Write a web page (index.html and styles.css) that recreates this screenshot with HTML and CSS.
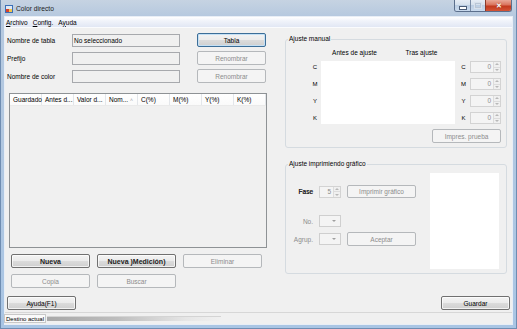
FILE: index.html
```html
<!DOCTYPE html>
<html lang="es">
<head>
<meta charset="UTF-8">
<title>Color directo</title>
<link rel="stylesheet" href="styles.css">
</head>
<body>
<div class="window">
  <div class="titlebar">
    <svg class="app-icon" width="8" height="8" viewBox="0 0 8 8">
      <rect x="0" y="0" width="8" height="8" fill="#3b6fb6"/>
      <rect x="1" y="1" width="6" height="3" fill="#dfe9f6"/>
      <rect x="1" y="4" width="3" height="3" fill="#d8412f"/>
      <rect x="4" y="4" width="3" height="3" fill="#f3c64a"/>
    </svg>
    <span class="title">Color directo</span>
    <div class="caption-buttons">
      <span class="cap min"><i></i></span>
      <span class="cap max"><i></i></span>
      <span class="cap close">&#x2715;</span>
    </div>
  </div>
  <div class="client">
    <div class="menubar">
      <span><u>A</u>rchivo</span>
      <span><u>C</u>onfig.</span>
      <span>A<u>y</u>uda</span>
    </div>
    <div class="content">
      <div class="panels">
        <div class="left">
          <div class="field-row">
            <span class="field-label">Nombre de tabla</span>
            <div class="textbox">No seleccionado</div>
            <button class="btn default">Tabla</button>
          </div>
          <div class="field-row">
            <span class="field-label">Prefijo</span>
            <div class="textbox"></div>
            <button class="btn disabled">Renombrar</button>
          </div>
          <div class="field-row">
            <span class="field-label">Nombre de color</span>
            <div class="textbox"></div>
            <button class="btn disabled">Renombrar</button>
          </div>
          <div class="listview">
            <div class="lv-header">
              <span>Guardado</span>
              <span>Antes d...</span>
              <span>Valor d...</span>
              <span>Nom... <em>&#x2c4;</em></span>
              <span>C(%)</span>
              <span>M(%)</span>
              <span>Y(%)</span>
              <span>K(%)</span>
            </div>
          </div>
          <div class="btn-row">
            <button class="btn wide strong">Nueva</button>
            <button class="btn wide strong">Nueva )Medición)</button>
            <button class="btn wide disabled">Eliminar</button>
          </div>
          <div class="btn-row">
            <button class="btn wide disabled">Copia</button>
            <button class="btn wide disabled">Buscar</button>
          </div>
        </div>
        <div class="right">
          <fieldset class="group">
            <legend>Ajuste manual</legend>
            <div class="manual">
              <div class="adjust-grid">
                <div class="adjust-head"><span>Antes de ajuste</span><span>Tras ajuste</span></div>
                <div class="preview"></div>
                <span class="ch r1">C</span><span class="ch r2">M</span><span class="ch r3">Y</span><span class="ch r4">K</span>
                <span class="ch side r1">C</span><span class="ch side r2">M</span><span class="ch side r3">Y</span><span class="ch side r4">K</span>
                <div class="spin r1"><span>0</span><b></b></div>
                <div class="spin r2"><span>0</span><b></b></div>
                <div class="spin r3"><span>0</span><b></b></div>
                <div class="spin r4"><span>0</span><b></b></div>
              </div>
              <div class="manual-actions">
                <button class="btn disabled">Impres. prueba</button>
              </div>
            </div>
          </fieldset>
          <fieldset class="group chart">
            <legend>Ajuste imprimiendo gráfico</legend>
            <div class="chart-body">
              <div class="chart-controls">
                <div class="ctl-row first">
                  <span class="ctl-label active">Fase</span>
                  <div class="spin small"><span>5</span><b></b></div>
                  <button class="btn disabled">Imprimir gráfico</button>
                </div>
                <div class="ctl-row second">
                  <span class="ctl-label">No.</span>
                  <div class="combo"></div>
                </div>
                <div class="ctl-row third">
                  <span class="ctl-label">Agrup.</span>
                  <div class="combo"></div>
                  <button class="btn disabled">Aceptar</button>
                </div>
              </div>
              <div class="chart-preview"></div>
            </div>
          </fieldset>
        </div>
      </div>
      <div class="footer">
        <button class="btn">Ayuda(F1)</button>
        <button class="btn">Guardar</button>
      </div>
    </div>
    <div class="statusbar">
      <span class="status-panel">Destino actual</span>
      <span class="status-glow"></span>
    </div>
  </div>
</div>
</body>
</html>
```

FILE: styles.css
```css
* {
  box-sizing: border-box;
}
html, body {
  margin: 0;
  padding: 0;
}
body {
  width: 517px;
  height: 329px;
  overflow: hidden;
  font-family: "Liberation Sans", Arial, sans-serif;
  font-size: 6.5px;
  color: #000;
  background: #fff;
}
.window {
  width: 517px;
  height: 329px;
  display: flex;
  flex-direction: column;
  padding: 0 5px 5px;
  background: linear-gradient(180deg, #c6d3e2 0, #b6c9df 16px, #a9c5e4 100%);
  box-shadow: inset 1px 0 0 #6f8db2, inset -1px 0 0 #6f8db2, inset 0 -1px 0 #6f8db2;
}
.titlebar {
  height: 17px;
  display: flex;
  align-items: flex-start;
}
.app-icon {
  margin-top: 5px;
}
.title {
  margin: 4px 0 0 3px;
  line-height: 9px;
  font-size: 6.7px;
  color: #1a1a1a;
}
.caption-buttons {
  margin-left: auto;
  display: flex;
  height: 12px;
  border: 1px solid #5b6f8c;
  border-top: none;
  border-radius: 0 0 3px 3px;
  overflow: hidden;
}
.cap {
  display: flex;
  align-items: center;
  justify-content: center;
  height: 100%;
  background: linear-gradient(180deg, #e6edf5 0, #d3dfec 50%, #bccee3 50%, #c9daee 100%);
}
.cap.min {
  width: 16px;
  border-right: 1px solid #7a8ca6;
}
.cap.min i {
  width: 6px;
  height: 2px;
  margin-top: 4px;
  background: #fff;
  outline: 1px solid #4b5d78;
}
.cap.max {
  width: 15px;
  border-right: 1px solid #8a3a2a;
}
.cap.max i {
  width: 6px;
  height: 5px;
  border: 1px solid #b9c6d6;
  box-shadow: 0 0 0 1px #d8e1ec;
}
.cap.close {
  width: 25px;
  color: #fff;
  font-size: 7px;
  font-weight: bold;
  text-shadow: 0 0 1px #7a1d10;
  background: linear-gradient(180deg, #e9a897 0, #d9735c 45%, #c2391d 55%, #d45436 100%);
}
.client {
  flex: 1;
  display: flex;
  flex-direction: column;
  background: #f0f0f0;
  box-shadow: 0 0 0 1px #e8eef6;
}
.menubar {
  height: 11px;
  display: flex;
  align-items: center;
  gap: 5px;
  padding-left: 1px;
  background: linear-gradient(180deg, #ffffff 0, #f0f3fa 40%, #e1e7f4 100%);
  border-bottom: 1px solid #fafbfd;
}
.menubar span {
  line-height: 11px;
}
.content {
  flex: 1;
  display: flex;
  flex-direction: column;
}
.panels {
  display: flex;
  padding: 5px 0 0 2px;
}
.left {
  width: 260px;
  margin-right: 18px;
}
.field-row {
  display: flex;
  align-items: center;
  height: 14px;
  margin-bottom: 4px;
}
.field-label {
  width: 65px;
}
.textbox {
  width: 108px;
  height: 13px;
  line-height: 11px;
  padding-left: 1px;
  border: 1px solid #a7a9ad;
  background: #f0f0f0;
}
.btn {
  height: 14px;
  width: 69px;
  padding: 0;
  font-family: inherit;
  font-size: 6.5px;
  color: #000;
  border: 1px solid #707070;
  border-radius: 2px;
  background: linear-gradient(180deg, #f3f3f3 0, #ebebeb 50%, #dcdcdc 50%, #cfcfcf 100%);
  box-shadow: inset 0 0 0 1px rgba(255,255,255,.7);
}
.field-row .btn {
  margin-left: 17px;
}
.btn.default {
  border-color: #3c6e98;
  box-shadow: inset 0 0 0 1px #c4e0f5;
}
.btn.disabled {
  color: #8c8c8c;
  border-color: #b5b8bb;
  background: #f4f4f4;
  box-shadow: none;
}
.btn.wide {
  width: 79px;
}
.btn.strong {
  font-size: 7px;
  font-weight: bold;
  color: #222;
}
.listview {
  margin: 10px 0 0 2px;
  width: 258px;
  height: 155px;
  border: 1px solid #8e9295;
  background: #f0f0f0;
}
.lv-header {
  display: flex;
  height: 12px;
  background: linear-gradient(180deg, #ffffff 0, #fafafa 100%);
  border-bottom: 1px solid #eaeaea;
}
.lv-header span {
  width: 32px;
  padding-left: 3px;
  line-height: 11px;
  white-space: nowrap;
  border-right: 1px solid #e3e6ea;
}
.lv-header em {
  font-style: normal;
  color: #9aa1a8;
  font-size: 5px;
}
.btn-row {
  display: flex;
  gap: 7px;
  margin-top: 6px;
  padding-left: 4px;
}
.right {
  width: 222px;
  margin-top: 2px;
}
.group {
  margin: 0;
  padding: 0;
  border: 1px solid #d5dbe0;
  border-radius: 3px;
}
.group legend {
  margin-left: 2px;
  padding: 0 1px;
  line-height: 8px;
  font-size: 6.5px;
}
.manual {
  width: 192px;
  margin-left: 23px;
  padding: 5px 0 4px;
}
.adjust-grid {
  display: grid;
  grid-template-columns: 12px 134px 15px 31px;
  grid-template-rows: 8px 12px 12px 12px 12px;
  row-gap: 5px;
  align-items: center;
}
.adjust-head {
  grid-column: 2;
  grid-row: 1;
  display: flex;
}
.adjust-head span {
  flex: 1;
  text-align: center;
}
.preview {
  grid-column: 2;
  grid-row: 2 / span 4;
  align-self: stretch;
  background: #fff;
}
.ch {
  grid-column: 1;
  text-align: center;
  font-size: 6px;
}
.ch.side {
  grid-column: 3;
  padding-left: 2px;
}
.r1 { grid-row: 2; }
.r2 { grid-row: 3; }
.r3 { grid-row: 4; }
.r4 { grid-row: 5; }
.spin {
  grid-column: 4;
  height: 12px;
  display: flex;
  border: 1px solid #d3d3d3;
  background: #f4f4f4;
  color: #8c8c8c;
}
.spin span {
  flex: 1;
  text-align: right;
  padding-right: 2px;
  line-height: 10px;
}
.spin b {
  width: 7px;
  border-left: 1px solid #dcdcdc;
  background:
    linear-gradient(#dcdcdc, #dcdcdc) center / 100% 1px no-repeat,
    #f0f0f0;
  position: relative;
}
.spin b::before,
.spin b::after {
  content: "";
  position: absolute;
  left: 1px;
  border-left: 2px solid transparent;
  border-right: 2px solid transparent;
}
.spin b::before {
  top: 1px;
  border-bottom: 2px solid #b8b8b8;
}
.spin b::after {
  bottom: 1px;
  border-top: 2px solid #b8b8b8;
}
.manual-actions {
  display: flex;
  justify-content: flex-end;
  margin-top: 5px;
}
.chart {
  margin-top: 12px;
}
.chart-body {
  display: flex;
  align-items: flex-start;
  padding: 5px 7px 4px 4px;
}
.chart-controls {
  flex: 1;
}
.ctl-row {
  display: flex;
  align-items: center;
  gap: 6px;
}
.ctl-row.first {
  margin-top: 12px;
  height: 13px;
}
.ctl-row.second {
  margin-top: 17px;
  height: 12px;
}
.ctl-row.third {
  margin-top: 5px;
  height: 14px;
}
.ctl-label {
  width: 23px;
  text-align: right;
  color: #8c8c8c;
}
.ctl-label.active {
  color: #000;
  -webkit-text-stroke: 0.2px #000;
}
.spin.small {
  width: 22px;
  height: 12px;
}
.ctl-row .btn {
  height: 13px;
}
.ctl-row.third .btn {
  height: 14px;
}
.combo {
  width: 22px;
  height: 12px;
  border: 1px solid #cfcfcf;
  background: #f4f4f4;
  position: relative;
}
.combo::after {
  content: "";
  position: absolute;
  right: 4px;
  top: 4px;
  border-left: 2px solid transparent;
  border-right: 2px solid transparent;
  border-top: 2px solid #a0a0a0;
}
.chart-preview {
  width: 69px;
  height: 96px;
  background: #fff;
}
.footer {
  margin-top: auto;
  display: flex;
  justify-content: space-between;
  padding: 0 2px 2px;
}
.statusbar {
  height: 12px;
  display: flex;
  align-items: center;
  border-top: 1px solid #d7d7d7;
  background: #f0f0f0;
}
.status-panel {
  height: 9px;
  line-height: 8px;
  padding: 0 1px;
  margin-left: -1px;
  border: 1px solid #c8c8c8;
  background: #fafafa;
  font-size: 6px;
}
.status-glow {
  width: 174px;
  height: 5px;
  margin-left: 1px;
  background: linear-gradient(90deg, #a8a8a8 0, #bdbdbd 40%, #e6e6e6 80%, #f0f0f0 100%);
  box-shadow: inset 0 1px 0 #d4d4d4;
}
```
